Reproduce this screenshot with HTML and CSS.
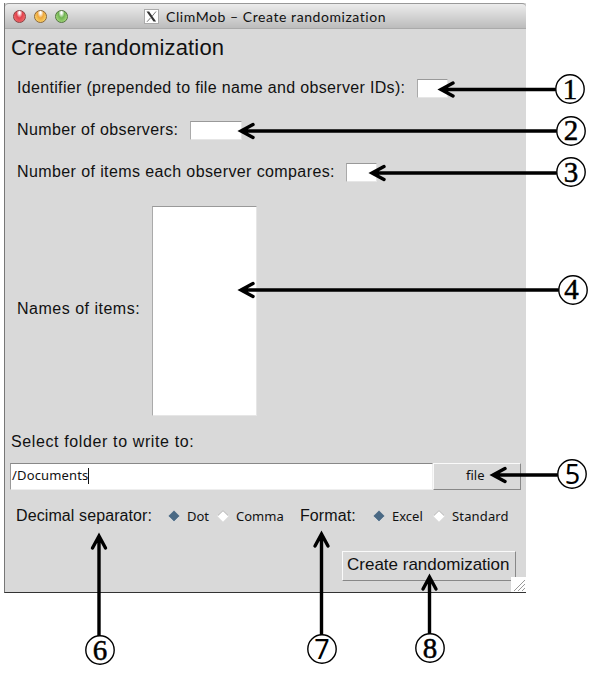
FILE: index.html
```html
<!DOCTYPE html>
<html lang="en">
<head>
<meta charset="utf-8">
<title>ClimMob – Create randomization</title>
<link rel="stylesheet" href="styles.css">
</head>
<body>
<main class="figure">
  <section class="window">
    <header class="titlebar">
      <div class="lights"><i class="light red"></i><i class="light amber"></i><i class="light green"></i></div>
      <svg class="app-icon" viewBox="0 0 15 15"><rect x=".5" y=".5" width="14" height="14" fill="#fff" stroke="#aaa"/><path d="M2.500 2.500h2.600l7 10h-2.600z" fill="#333"/><path d="M12 2.500L8.300 7M6.600 8.800L3 12.800" stroke="#555" stroke-width=".8"/></svg>
      <span class="title">ClimMob – Create randomization</span>
    </header>
    <div class="content">
      <h1 class="heading">Create randomization</h1>
      <div class="row"><span class="label id-label">Identifier (prepended to file name and observer IDs):</span><span class="field small"></span></div>
      <div class="row"><span class="label obs-label">Number of observers:</span><span class="field medium"></span></div>
      <div class="row"><span class="label cmp-label">Number of items each observer compares:</span><span class="field small"></span></div>
      <div class="row items"><span class="label items-label">Names of items:</span><span class="field list"></span></div>
      <div class="folder-label">Select folder to write to:</div>
      <div class="folder"><span class="path">/Documents<i class="caret"></i></span><span class="button file">file</span></div>
      <div class="options">
        <span class="option-label separator">Decimal separator:</span>
        <svg class="diamond" viewBox="0 0 13 13"><path d="M.5 7L6.500 13l6-6" fill="#f5f5f5"/><path d="M.5 6.500L6.500.5l6 6-6 6z" fill="#4a6984"/></svg>
        <span class="choice dot">Dot</span>
        <svg class="diamond" viewBox="0 0 13 13"><path d="M.3 6.500L6.500.3l6.200 6.200-6.200 6.200z" fill="#fff"/><path d="M1 6L6.500.7 12 6" fill="none" stroke="#aaa"/></svg>
        <span class="choice comma">Comma</span>
        <span class="option-label format">Format:</span>
        <svg class="diamond" viewBox="0 0 13 13"><path d="M.5 7L6.500 13l6-6" fill="#f5f5f5"/><path d="M.5 6.500L6.500.5l6 6-6 6z" fill="#4a6984"/></svg>
        <span class="choice excel">Excel</span>
        <svg class="diamond" viewBox="0 0 13 13"><path d="M.3 6.500L6.500.3l6.200 6.200-6.200 6.200z" fill="#fff"/><path d="M1 6L6.500.7 12 6" fill="none" stroke="#aaa"/></svg>
        <span class="choice standard">Standard</span>
      </div>
      <div class="actions"><span class="button create">Create randomization</span></div>
    </div>
    <svg class="grip" viewBox="0 0 15 15"><path fill="#fff" d="M0 0h15v15H0z"/><path d="M3 14L14 3M7 14l7-7M11 14l3-3" stroke="#999"/></svg>
  </section>
  <svg class="callouts" viewBox="0 0 612 675">
    <g class="arrows">
      <path d="M555 89.500H442M453 83l-12 6.500 12 6.500"/>
      <path d="M556 131H242M553 131H242M253 124.500L241 131l12 6.500"/>
      <path d="M556 173H373M384 166.500l-12 6.500 12 6.500"/>
      <path d="M558 290H241M253 283.500L241 290l12 6.500"/>
      <path d="M557 475H493M505 468.500L493 475l12 6.500"/>
      <path d="M99 636V536M92.500 548L99 536l6.500 12"/>
      <path d="M321.500 635V534M315 546l6.500-12 6.500 12"/>
      <path d="M429.500 634V577M423 589l6.500-12 6.500 12"/>
    </g>
    <g class="circles">
      <circle cx="570" cy="89" r="14.200"/><circle cx="571" cy="131" r="14.200"/><circle cx="571" cy="172" r="14.200"/><circle cx="573" cy="290" r="14.200"/><circle cx="572" cy="474" r="14.200"/><circle cx="100" cy="650" r="14.200"/><circle cx="322" cy="649" r="14.200"/><circle cx="430" cy="648" r="14.200"/>
    </g>
    <g class="digits">
      <text x="570" y="99">1</text><text x="571" y="140">2</text><text x="571" y="182">3</text><text x="571.500" y="299">4</text><text class="sans" x="572.500" y="484">5</text><text x="100" y="660">6</text><text class="sans" x="322" y="659">7</text><text x="430" y="658">8</text>
    </g>
  </svg>
</main>
</body>
</html>
```

FILE: styles.css
```css
* { box-sizing: border-box; }
body { margin: 0; background: #fff; color: #111; font-family: "Liberation Sans", sans-serif; }
.figure { position: relative; width: 612px; height: 675px; padding: 3px 0 0 4px; overflow: hidden; }
.window { position: relative; width: 522px; height: 590px; background: #d9d9d9; border-left: 1px solid #777; border-bottom: 1px solid #333; }
.titlebar { display: flex; align-items: center; height: 26px; padding: 1px 0 0 8px; border-top: 1px solid #999; border-bottom: 1px solid #aaa; border-radius: 4px 4px 0 0; background: linear-gradient(#ececec, #bcbcbc); }
.lights { display: flex; gap: 8px; width: 131px; }
.light { width: 13px; height: 13px; border-radius: 50%; border: 1px solid #777; }
.red { background: radial-gradient(ellipse at 50% 15%, #fff 0 8%, #e3414c 40%, #f47b78 95%); border-color: #8a4143; }
.amber { background: radial-gradient(ellipse at 50% 15%, #fff 0 8%, #eea63c 40%, #ffe77d 95%); border-color: #8d6737; }
.green { background: radial-gradient(ellipse at 50% 15%, #fff 0 8%, #70b452 40%, #bce98f 95%); border-color: #52743f; }
.app-icon { width: 15px; height: 15px; }
.title { margin-left: 7px; font: 14px/24px "Lato", sans-serif; letter-spacing: .56px; white-space: nowrap; }
.content { padding: 7px 5px 0; }
.heading { margin: 0 0 19px 1px; font-size: 22px; font-weight: 400; line-height: 24px; height: 24px; letter-spacing: .14px; }
.row { display: flex; align-items: center; height: 19px; margin: 0 0 23px 7px; font-size: 16px; white-space: nowrap; }
.label { flex: none; line-height: 20px; position: relative; top: -1px; }
.id-label { width: 400px; letter-spacing: .33px; }
.obs-label { width: 173px; letter-spacing: .38px; }
.cmp-label { width: 329px; letter-spacing: .4px; }
.items-label { width: 135px; top: -2px; letter-spacing: .5px; }
.field { flex: none; height: 19px; background: #fff; border: 1px solid #e6e6e6; border-top-color: #999; border-left-color: #aaa; }
.small { width: 31px; }
.medium { width: 52px; }
.list { width: 105px; height: 210px; }
.items { height: 210px; margin-top: 24px; margin-bottom: 15px; }
.folder-label { height: 21px; margin: 0 0 11px 1px; font-size: 16px; line-height: 21px; letter-spacing: .62px; }
.folder { display: flex; height: 27px; font: 13px/23px "Noto Sans", sans-serif; }
.path { display: flex; align-items: center; width: 423px; padding: 0 0 2px 1px; letter-spacing: .15px; background: #fff; border: 1px solid #eee; border-top-color: #888; border-left-color: #999; }
.caret { width: 1px; height: 16px; background: #111; }
.button { background: #d9d9d9; border: 1px solid #fafafa; border-bottom-color: #888; border-right-color: #888; white-space: nowrap; }
.file { width: 88px; padding-left: 32px; }
.options { display: flex; align-items: center; height: 20px; margin: 16px 0 0 6px; font: 13px/20px "Noto Sans", sans-serif; white-space: nowrap; }
.option-label { font: 16px/20px "Liberation Sans", sans-serif; }
.separator { width: 152px; letter-spacing: .1px; }
.diamond { flex: none; width: 12px; height: 12px; }
.choice { padding-left: 7px; }
.dot { width: 37px; }
.comma { width: 71px; }
.format { width: 73px; letter-spacing: .1px; }
.excel { width: 48px; }
.standard { letter-spacing: .15px; }
.actions { display: flex; justify-content: flex-end; margin: 25px 5px 0 0; }
.create { width: 174px; height: 30px; padding-left: 4px; font-size: 17px; line-height: 25px; }
.grip { position: absolute; right: 0; bottom: 0; width: 15px; height: 15px; }
.callouts { position: absolute; left: 0; top: 0; width: 612px; height: 675px; }
.arrows { fill: none; stroke: #000; stroke-width: 3.4; stroke-linecap: round; }
.circles { fill: #fff; stroke: #000; stroke-width: 1.4; }
.digits { font: 29px "Liberation Serif", serif; text-anchor: middle; fill: #000; stroke: #000; stroke-width: .5; }
.sans { font: 27px "Noto Sans", sans-serif; stroke: none; }
```
